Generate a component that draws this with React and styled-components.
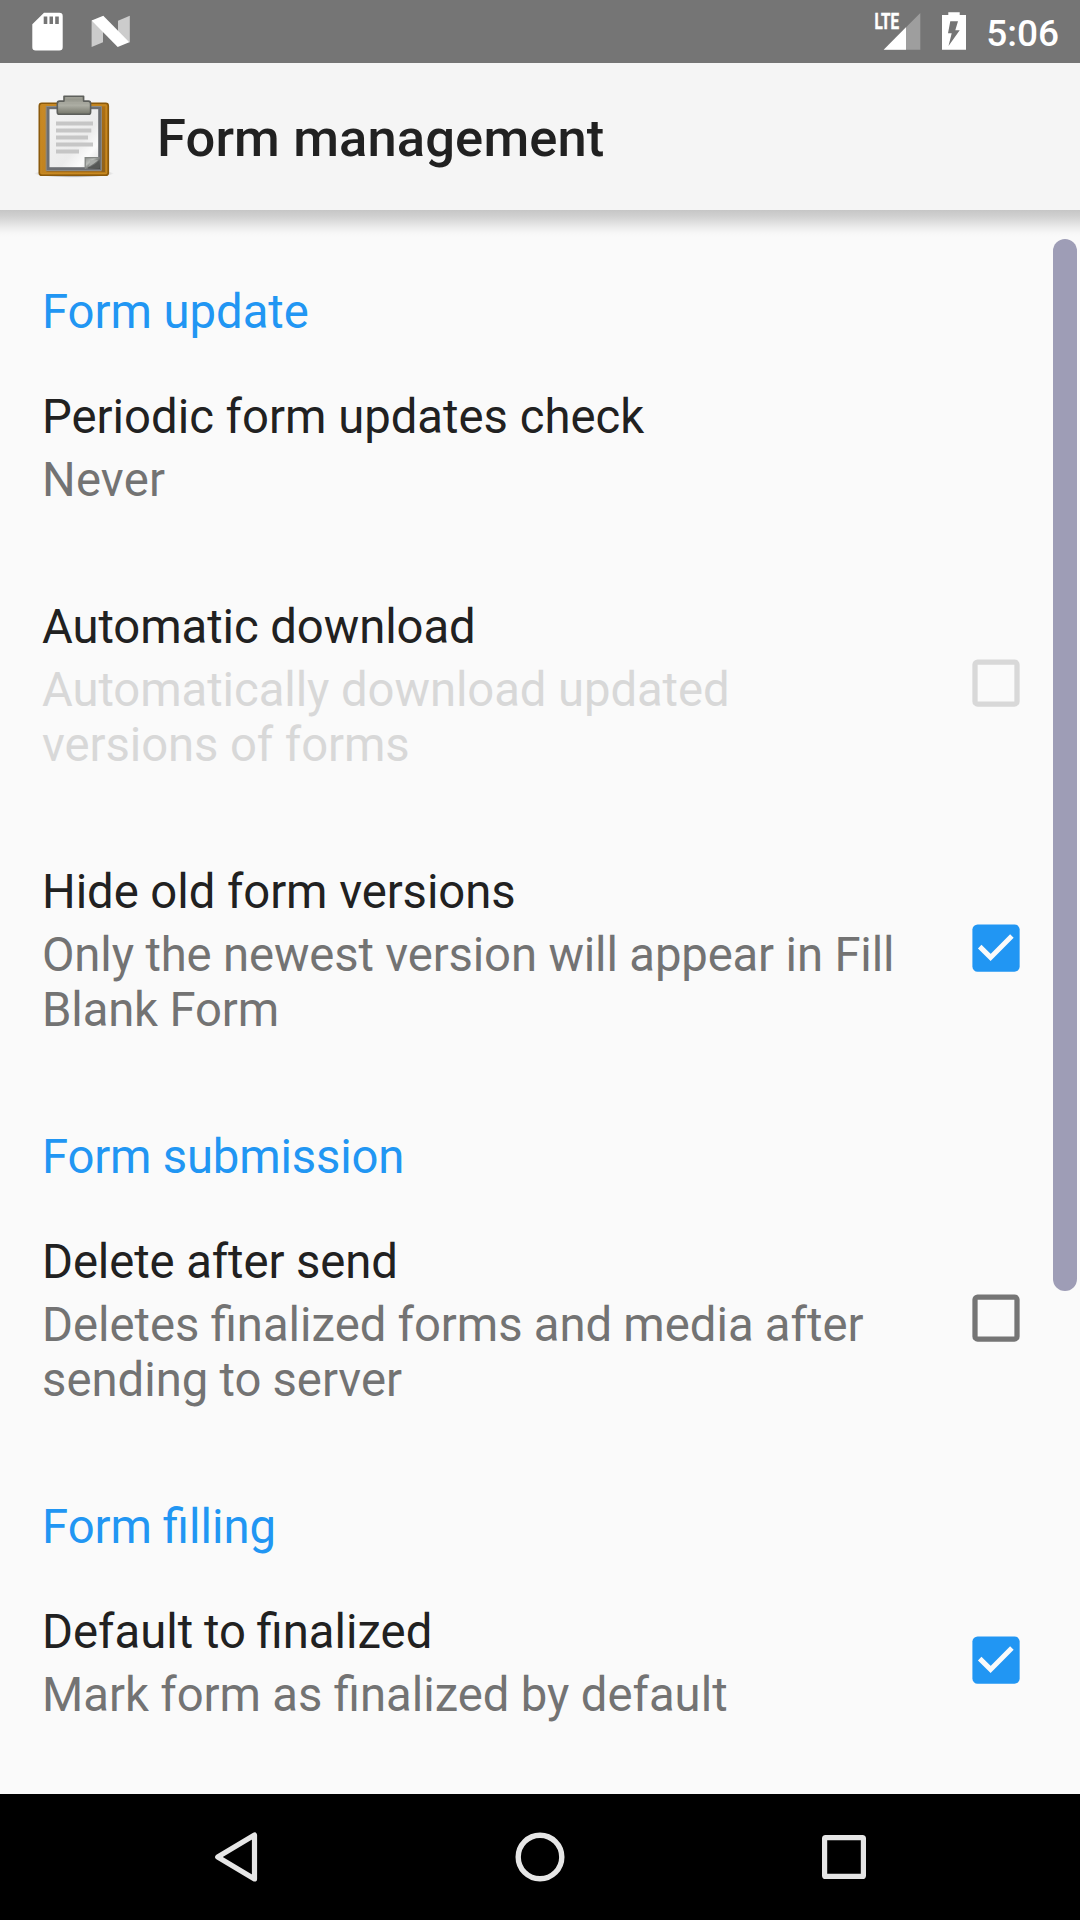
import React from "react";
import styled, { createGlobalStyle } from "styled-components";

const GlobalStyle = createGlobalStyle`
  * { box-sizing: border-box; }
  body { margin: 0; background: #fafafa; }
`;

const Screen = styled.div`
  width: 1080px;
  height: 1920px;
  display: flex;
  flex-direction: column;
  overflow: hidden;
  background: #fafafa;
  font-family: Roboto, "Liberation Sans", sans-serif;
  color: #212121;
`;

const StatusBar = styled.header`
  flex: none;
  height: 63px;
  display: flex;
  align-items: center;
  justify-content: space-between;
  padding: 0 21px 0 32px;
  background: #757575;
`;

const StatusGroup = styled.div`
  display: flex;
  align-items: center;
`;

const StatusIcon = styled.svg`
  display: block;
  margin-right: ${(p) => p.$gap || 0}px;
`;

const Clock = styled.span`
  font-size: 37px;
  font-weight: 500;
  line-height: 44px;
  padding-top: 4px;
  color: #fff;
`;

const AppBar = styled.div`
  flex: none;
  height: 147px;
  display: flex;
  align-items: center;
  padding-left: 32px;
  background: #f5f5f5;
`;

const AppIcon = styled.svg`
  display: block;
  flex: none;
  margin-right: 41px;
`;

const Title = styled.h1`
  margin: 0;
  padding-top: 3px;
  font-size: 52.5px;
  font-weight: 500;
  line-height: 62px;
  letter-spacing: 0.13px;
`;

const Content = styled.main`
  position: relative;
  flex: 1;
  min-height: 0;
  overflow: hidden;
  padding-top: 26px;
  background: linear-gradient(
    #c6c6c6 0, #d0d0d0 6px, #dedede 12px, #ededed 18px, #f7f7f7 23px, #fafafa 27px
  );
`;

const ScrollThumb = styled.div`
  position: absolute;
  top: 28.5px;
  right: 2.6px;
  width: 24px;
  height: 1052px;
  border-radius: 12px;
  background: #9e9db6;
`;

const Category = styled.h2`
  margin: 0;
  height: 105px;
  padding: 49px 42px 0;
  font-size: 47.25px;
  font-weight: 400;
  line-height: 55px;
  letter-spacing: ${(p) => p.$tracking || 0}px;
  word-spacing: ${(p) => p.$wordGap || 0}px;
  color: #2196f3;
`;

const Preference = styled.div`
  display: flex;
  align-items: center;
  justify-content: space-between;
  padding: 49px 60px 43px 42px;
`;

const PreferenceText = styled.div`
  display: flex;
  flex-direction: column;
  gap: 8px;
  width: 870px;
  font-size: 47.25px;
  line-height: 55px;
`;

const Name = styled.div`
  letter-spacing: ${(p) => p.$tracking || 0}px;
  word-spacing: ${(p) => p.$wordGap || 0}px;
`;

const Summary = styled(Name)`
  color: ${(p) => (p.$disabled ? "#d8d8d8" : "#737373")};
`;

const CheckSlot = styled.div`
  flex: none;
  margin: -50px 0 -43px;
  padding-bottom: 1px;
`;

const CheckSvg = styled.svg`
  display: block;
`;

const NavBar = styled.nav`
  flex: none;
  height: 126px;
  display: flex;
  align-items: center;
  justify-content: space-between;
  padding: 0 213px;
  background: #000;
`;

const NavIcon = styled.svg`
  display: block;
`;

function Checkbox({ state }) {
  return (
    <CheckSvg width="48" height="48" viewBox="0 0 48 48">
      {state === "on" ? (
        <>
          <rect x="0.4" y="0.4" width="47.25" height="47.25" rx="5.2" fill="#2196f3" />
          <path d="M7.7 22.6 L18.6 33.4 L39.9 12.1" fill="none" stroke="#fafafa" strokeWidth="5" />
        </>
      ) : (
        <rect
          x="3" y="3" width="42" height="42" rx="2.6" fill="none" strokeWidth="5.25"
          stroke={state === "disabled" ? "#d8d8d8" : "#757575"}
        />
      )}
    </CheckSvg>
  );
}

function Item({ title, summary, check, titleTracking, tracking, titleWordGap, wordGap }) {
  return (
    <Preference>
      <PreferenceText>
        <Name $tracking={titleTracking} $wordGap={titleWordGap}>{title}</Name>
        <Summary $disabled={check === "disabled"} $tracking={tracking} $wordGap={wordGap}>{summary}</Summary>
      </PreferenceText>
      {check && (
        <CheckSlot>
          <Checkbox state={check} />
        </CheckSlot>
      )}
    </Preference>
  );
}

function Clipboard() {
  return (
    <AppIcon width="84" height="84" viewBox="32 94.5 84 84">
      <defs>
        <linearGradient id="board" x1="0" x2="1" y1="0" y2="0.6">
          <stop offset="0" stopColor="#c98a28" />
          <stop offset="1" stopColor="#b97b17" />
        </linearGradient>
        <linearGradient id="boardShade" x1="0" x2="0" y1="0" y2="1">
          <stop offset="0" stopColor="#ad7014" />
          <stop offset="1" stopColor="#8f611c" />
        </linearGradient>
        <linearGradient id="clip" x1="0" x2="0" y1="0" y2="1">
          <stop offset="0" stopColor="#8b8c82" />
          <stop offset="0.5" stopColor="#adaea4" />
          <stop offset="1" stopColor="#747569" />
        </linearGradient>
        <linearGradient id="paper" x1="0" x2="1" y1="0" y2="1">
          <stop offset="0" stopColor="#f4f4f4" />
          <stop offset="0.6" stopColor="#ececec" />
          <stop offset="0.78" stopColor="#fbfbfb" />
          <stop offset="1" stopColor="#d8d8d8" />
        </linearGradient>
        <linearGradient id="curl" x1="0" x2="1" y1="0" y2="1">
          <stop offset="0" stopColor="#8d908d" />
          <stop offset="0.35" stopColor="#babdb9" />
          <stop offset="0.55" stopColor="#737573" />
          <stop offset="1" stopColor="#3f413f" />
        </linearGradient>
        <radialGradient id="ground">
          <stop offset="0.7" stopColor="#000" stopOpacity="0.25" />
          <stop offset="1" stopColor="#000" stopOpacity="0" />
        </radialGradient>
      </defs>
      <ellipse cx="74" cy="173" rx="40" ry="4.2" fill="url(#ground)" />
      <rect x="39.3" y="102.8" width="69" height="72" rx="2.6" fill="url(#board)" stroke="#8b5a0c" strokeWidth="1.6" />
      <path d="M41.2 104.8H106.4V173H41.2Z" fill="none" stroke="#c78922" strokeWidth="1" />
      <path d="M101.5 106H105V171.5H47V170H101.5Z" fill="url(#boardShade)" />
      <path d="M46.2 106h1.3v64h54v1.3H46.2Z" fill="#a87324" />
      <rect x="48" y="107.2" width="51.7" height="61" fill="url(#paper)" stroke="#6c6e72" strokeWidth="3" />
      <path d="M46.2 170V106H101.4V170Z" fill="none" stroke="#8b8a87" strokeWidth="1" />
      <g fill="#c6c6c6">
        <rect x="56" y="121" width="37" height="4" />
        <rect x="56" y="128" width="35.3" height="4" />
        <rect x="56" y="135" width="32" height="4" />
        <rect x="56" y="142" width="37" height="4" />
        <rect x="56" y="149" width="23" height="4" />
      </g>
      <path d="M85 157H100V168.5H85Z" fill="url(#curl)" />
      <path d="M85.2 168V157.2H99" fill="none" stroke="#858885" strokeWidth="1.3" />
      <path d="M88 167C92 166 97 163 99.5 159.5V168H88Z" fill="#565856" />
      <path d="M88 166.5C91.5 165 96 162 98.5 159C94 160.5 90.5 159.5 90 159.5C90.5 162 89.5 165 88 166.5Z" fill="#a9aca8" />
      <path d="M64 95.8H83.6V100.6H88.3Q90.6 100.6 90.6 103V111.4Q90.6 113.8 88.3 113.8H59.6Q57.3 113.8 57.3 111.4V103Q57.3 100.6 59.6 100.6H64Z"
        fill="url(#clip)" stroke="#5d5f5b" strokeWidth="1.6" strokeLinejoin="round" />
      <path d="M65.5 97.4H82.2M59.3 102.3H88.7" stroke="#a8a99f" strokeWidth="1" />
    </AppIcon>
  );
}

export default function App() {
  return (
    <Screen>
      <GlobalStyle />
      <StatusBar>
        <StatusGroup>
          <StatusIcon $gap={27} width="32" height="40" viewBox="32 12 32 40">
            <path
              fillRule="evenodd" fill="#fff"
              d="M44 12.7H59.3Q62.7 12.7 62.7 16V47.3Q62.7 50.6 59.3 50.6H35.7Q32.3 50.6 32.3 47.3V24.3ZM43.7 16.5V24H47.3V16.5ZM49.5 16.5V24H53V16.5ZM55.2 16.5V24H58.8V16.5Z"
            />
          </StatusIcon>
          <StatusIcon width="40" height="40" viewBox="91 12 40 40">
            <path d="M91.6 20.4L103 26V42.3L91.6 47Z" fill="#ccc" />
            <path d="M118 20.7L129.8 15.8V42.5L118 37Z" fill="#ccc" />
            <path d="M91.6 20.4L103.3 15.7L129.3 42.2L117.7 47Z" fill="#fff" />
          </StatusIcon>
        </StatusGroup>
        <StatusGroup>
          <StatusIcon $gap={20} width="48" height="52" viewBox="874 6 48 52">
            <path d="M921.3 13V49.7H884.7Z" fill="#9e9e9e" />
            <path d="M876 12H900.5V30.2H876Z" fill="#757575" />
            <path d="M907 27.3V49.7H884.7Z" fill="#fff" />
            <text x="875.5" y="29" fontSize="21.5" fontWeight="700" fill="#fff" stroke="#fff" strokeWidth="0.5" textLength="24.5" lengthAdjust="spacingAndGlyphs">LTE</text>
          </StatusIcon>
          <StatusIcon $gap={19} width="26" height="40" viewBox="942 12 26 40">
            <path d="M949.3 12.3H960.7V15H967V49.8H943V15H949.3Z" fill="#fff" />
            <path d="M951.3 21.3H959L956.3 30.3H960.7L949.5 46L952.7 33.2H949Z" fill="#757575" />
          </StatusIcon>
          <Clock>5:06</Clock>
        </StatusGroup>
      </StatusBar>
      <AppBar>
        <Clipboard />
        <Title>Form management</Title>
      </AppBar>
      <Content>
        <Category $tracking={-0.04}>Form update</Category>
        <Item title="Periodic form updates check" summary="Never" tracking={0.2} />
        <Item
          title="Automatic download" titleTracking={-0.08}
          summary="Automatically download updated versions of forms" tracking={-0.08}
          check="disabled"
        />
        <Item
          title="Hide old form versions" titleTracking={-0.06}
          summary="Only the newest version will appear in Fill Blank Form" tracking={-0.15}
          check="on"
        />
        <Category $tracking={-0.19}>Form submission</Category>
        <Item
          title="Delete after send" titleTracking={-0.1}
          summary="Deletes finalized forms and media after sending to server" wordGap={-0.6}
          check="off"
        />
        <Category $wordGap={-1}>Form filling</Category>
        <Item
          title="Default to finalized" titleWordGap={-1}
          summary="Mark form as finalized by default" wordGap={-0.4}
          check="on"
        />
        <ScrollThumb />
      </Content>
      <NavBar>
        <NavIcon width="48" height="52" viewBox="213 1831 48 52">
          <path d="M217.7 1857L254.5 1835V1879Z" fill="none" stroke="#e6e6e6" strokeWidth="5.2" strokeLinejoin="round" />
        </NavIcon>
        <NavIcon width="52" height="52" viewBox="514 1831 52 52">
          <circle cx="540" cy="1857" r="21.8" fill="none" stroke="#e6e6e6" strokeWidth="5.4" />
        </NavIcon>
        <NavIcon width="48" height="52" viewBox="819 1831 48 52">
          <rect x="824.6" y="1837.6" width="38.8" height="38.8" rx="1" fill="none" stroke="#e6e6e6" strokeWidth="5.2" />
        </NavIcon>
      </NavBar>
    </Screen>
  );
}
